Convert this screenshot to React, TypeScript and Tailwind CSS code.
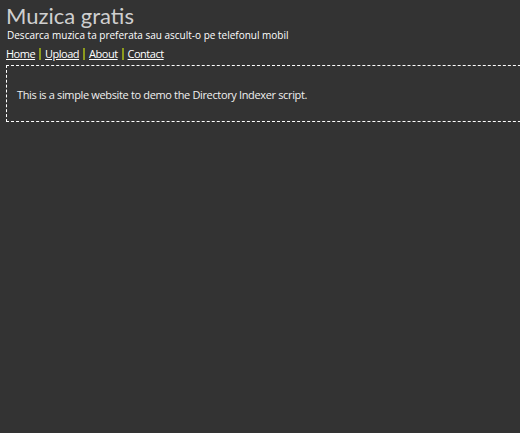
export default function App() {
  return (
    <div className="w-[520px] h-[433px] bg-[#333333] overflow-hidden" style={{ fontFamily: "'Open Sans', sans-serif" }}>
      <div className="pl-[6px] pt-[3px]">
        <h1 className="text-[22px] leading-[26px] text-[#cfcfcf]" style={{ fontFamily: "Lato, 'Open Sans', sans-serif" }}>Muzica gratis</h1>
        <p className="text-[10px] leading-[13px] font-medium text-white pl-[1px]" style={{ fontFamily: "'Open Sans', sans-serif" }}>
          Descarca muzica ta preferata sau ascult-o pe telefonul mobil
        </p>
      </div>
      <nav className="pl-[6px] mt-[5px] h-[14px] text-[11px] leading-[14px] text-white flex items-center" style={{ fontFamily: "'Open Sans', sans-serif" }}>
        <a className="underline tracking-[-0.5px] flex-none">Home</a>
        <span className="ml-[4px] mr-[4px] w-[2px] h-[12px] bg-[#8c9b1d] flex-none"></span>
        <a className="underline tracking-[-0.5px] flex-none">Upload</a>
        <span className="ml-[4px] mr-[4px] w-[2px] h-[12px] bg-[#8c9b1d] flex-none"></span>
        <a className="underline tracking-[-0.5px] flex-none">About</a>
        <span className="ml-[4px] mr-[4px] w-[2px] h-[12px] bg-[#8c9b1d] flex-none"></span>
        <a className="underline tracking-[-0.5px] flex-none">Contact</a>
      </nav>
      <div className="ml-[6px] mt-[4px] w-[540px] h-[57px] border border-dashed border-white flex items-center pl-[10px] pt-[3px]">
        <p className="text-[11px] text-[#f0f0f0] tracking-[-0.35px]" style={{ fontFamily: "'Open Sans', sans-serif" }}>
          This is a simple website to demo the Directory Indexer script.
        </p>
      </div>
    </div>
  );
}
